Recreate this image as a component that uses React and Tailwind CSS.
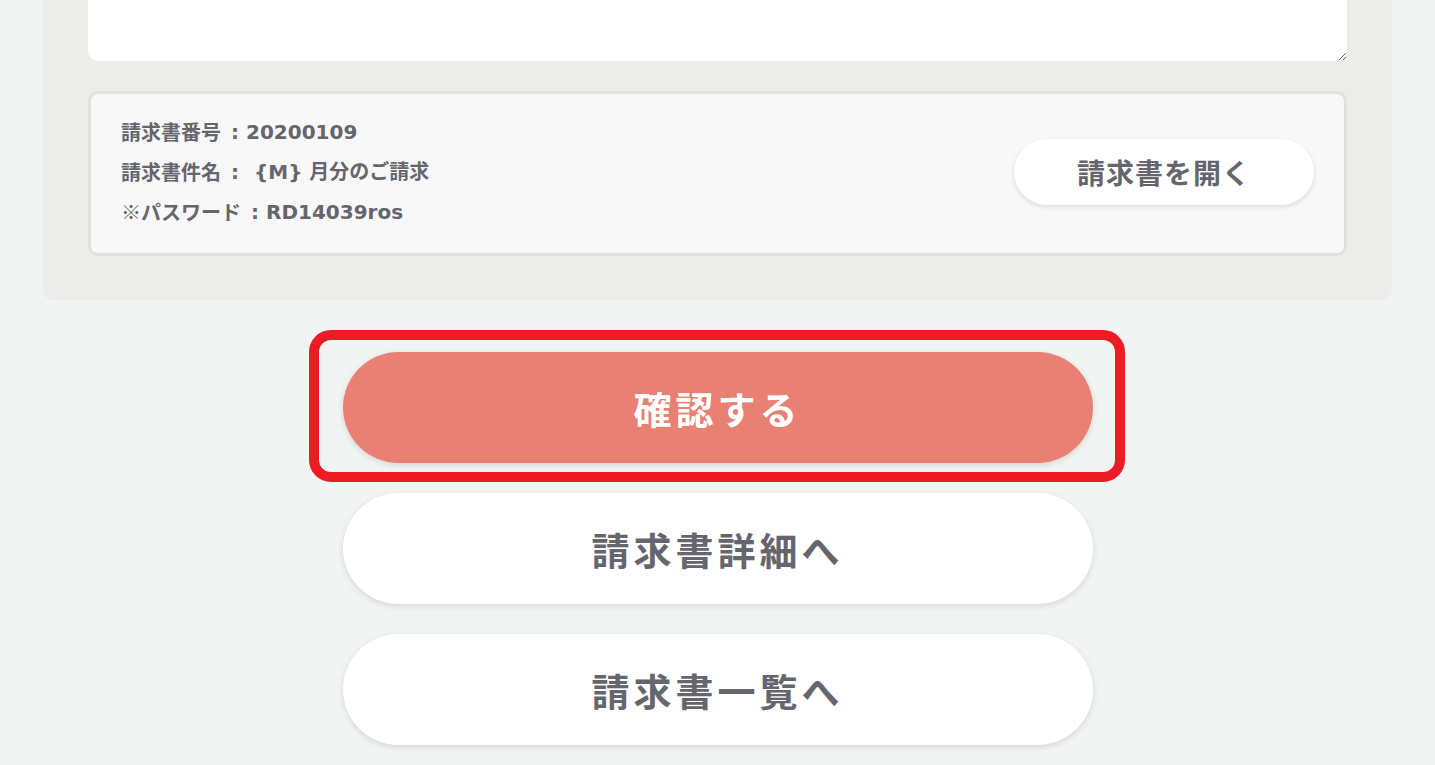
import { useState } from "react";

const font = { fontFamily: '"Noto Sans CJK JP", "Noto Sans", sans-serif' };
const latinFont = { fontFamily: '"DejaVu Sans", "Noto Sans CJK JP", sans-serif' };

const invoice = [
  { label: "請求書番号", value: "20200109" },
  { label: "請求書件名", value: "{M} 月分のご請求", gap: true },
  { label: "※パスワード", value: "RD14039ros" },
];

function PillButton({ children, primary }) {
  return (
    <button
      className={
        primary
          ? "flex h-[111px] w-full items-center justify-center rounded-full bg-[#e88074] text-[38px] font-bold tracking-[4px] text-white shadow-[0_2px_6px_rgba(0,0,0,0.12)]"
          : "flex h-[111px] w-full items-center justify-center rounded-full bg-white text-[38px] font-bold tracking-[4px] text-[#65656e] shadow-[0_2px_6px_rgba(0,0,0,0.12)]"
      }
    >
      {children}
    </button>
  );
}

export default function App() {
  const [memo, setMemo] = useState("");

  return (
    <div className="min-h-[765px] w-full bg-[#f2f4f3] pb-[20px]" style={font}>
      <div className="mx-[43px] rounded-b-[10px] bg-[#ecedea] px-[45px] pb-[44px]">
        <textarea
          value={memo}
          onChange={(e) => setMemo(e.target.value)}
          className="block h-[61px] w-full rounded-b-[10px] bg-white outline-none"
        />
        <div className="mt-[30px] flex items-center justify-between rounded-[10px] border-[3px] border-[#e0e2dd] bg-[#f8f8f8] pl-[30px] pr-[30px] pt-[18px] pb-[21px]">
          <div className="text-[20px] font-bold leading-[40px] text-[#65656e]">
            {invoice.map((row) => (
              <div key={row.label} className="flex">
                <span>{row.label}</span>
                <span className="ml-[10px] mr-[7px]" style={latinFont}>:</span>
                <span className={row.gap ? "pl-[8px]" : ""} style={latinFont}>
                  {row.value}
                </span>
              </div>
            ))}
          </div>
          <button className="h-[66px] w-[300px] rounded-full bg-white text-[28px] font-bold tracking-[1px] text-[#65656e] shadow-[0_2px_5px_rgba(0,0,0,0.12)]">
            請求書を開く
          </button>
        </div>
      </div>

      <div className="mx-auto mt-[52px] flex w-[750px] flex-col gap-[30px]">
        <div className="relative">
          <PillButton primary>確認する</PillButton>
          <div className="pointer-events-none absolute -top-[22px] -bottom-[19px] -left-[34px] -right-[32px] rounded-[22px] border-[10px] border-[#ed1c24]" />
        </div>
        <PillButton>請求書詳細へ</PillButton>
        <PillButton>請求書一覧へ</PillButton>
      </div>
    </div>
  );
}
